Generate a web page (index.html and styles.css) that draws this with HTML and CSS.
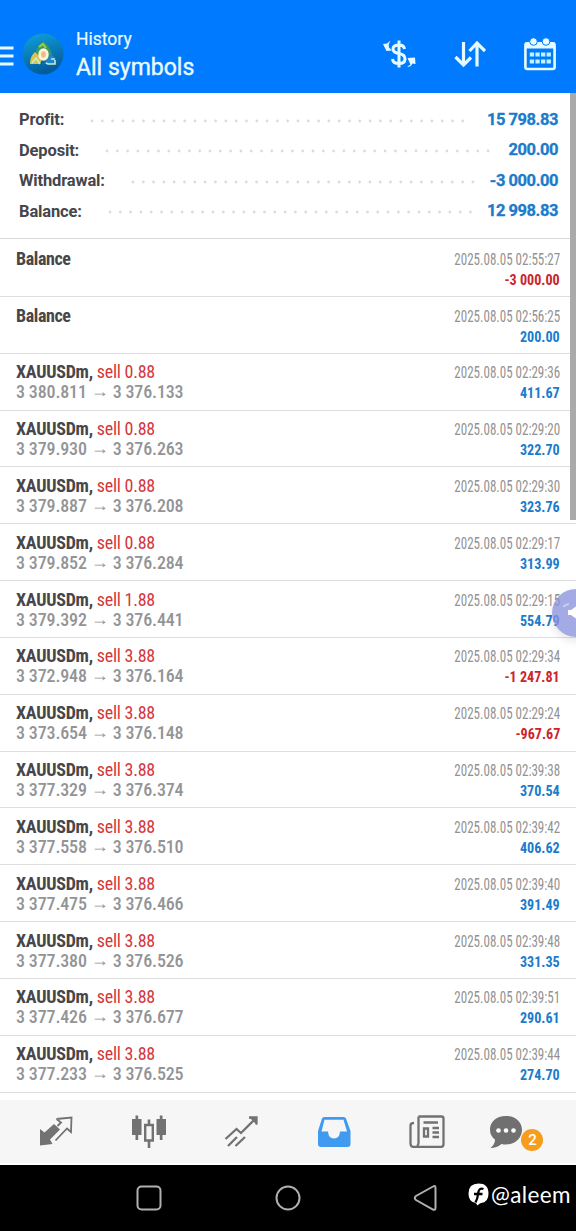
FILE: index.html
```html
<!DOCTYPE html>
<html lang="en">
<head>
<meta charset="utf-8">
<title>History</title>
<link rel="stylesheet" href="styles.css">
</head>
<body>
<div class="app">
<header class="bar">
  <svg class="menu" width="14" height="22" viewBox="0 0 14 22"><path d="M0 3H13.5M0 11H13.5M0 19H13.5" stroke="#e8fbff" stroke-width="2.8"/></svg>
  <svg class="logo" width="42" height="44" viewBox="0 0 42 44">
    <defs><linearGradient id="g" x1="0" y1="0" x2="0.3" y2="1"><stop offset="0" stop-color="#10a2dc"/><stop offset="1" stop-color="#045c9c"/></linearGradient></defs>
    <circle cx="21" cy="22" r="20.5" fill="url(#g)"/>
    <path d="M13 24Q15 12 21 10Q27 12 30 23L24 28H16Z" fill="#3c9a5a"/>
    <path d="M8 32Q8 24 13 20L20 27L18 32Z" fill="#d8c548"/>
    <path d="M22 32L28 22Q34 24 34 32Z" fill="#1c86c8"/>
    <path d="M10 31L14 26L18 32M24 31L26 32H33V28M29 27L33 27" fill="none" stroke="#c8ecd8" stroke-width="1.5"/>
    <path d="M17 15L21 12L24 16" fill="none" stroke="#9ccf50" stroke-width="2"/>
    <ellipse cx="21.500" cy="22.500" rx="5.200" ry="6.200" fill="#fff4dc"/><ellipse cx="21.500" cy="22.500" rx="2.400" ry="3.200" fill="#e8bd88"/>
  </svg>
  <div class="titles"><div class="t1">History</div><div class="t2">All symbols</div></div>
  <div class="actions">
    <svg width="34" height="30" viewBox="0 0 34 30" fill="none" stroke="#e6fbff" stroke-width="3">
      <path d="M22.500 10Q22 6 17 6Q11 6 11 10Q11 13.500 17 14.500Q23 15.500 23 20Q23 24.500 17 24.500Q11 24.500 10.500 20M17 1.500V28.500"/>
      <path d="M8.500 1.500L5 4.500L1 5L4.500 12L10 11.500L7 8.500Q6 5.500 8.500 1.500ZM25 28L28.500 25.500L25.500 19L33 18.500L33.500 25L30.500 24.500Q29 28 25 28Z" fill="#e6fbff" stroke="none"/></svg>
    <svg width="32" height="28" viewBox="0 0 32 28" fill="none" stroke="#e6fbff" stroke-width="3.200"><path d="M9.500 2V25M1.500 17L9.500 25L17 17.500M23 26.500V3M15.500 11L23 3L31 11"/></svg>
    <svg width="32" height="34" viewBox="0 0 32 34"><rect x="1.400" y="6.400" width="29.200" height="25.600" rx="2" fill="none" stroke="#e6fbff" stroke-width="2.600"/><path d="M1 5.500H31V11.500H1Z" fill="#e6fbff"/><g fill="#e6fbff" stroke="#007aff"><circle cx="9.500" cy="4.500" r="3.800"/><circle cx="22" cy="4.500" r="3.800"/></g><path d="M5.800 17.500H26.900M5.800 24.500H26.900" stroke="#c0f2ff" stroke-width="4.200" stroke-dasharray="4.300 1.300"/></svg>
  </div>
</header>
<main class="content">
<section class="summary">
  <div class="sum"><b>Profit:</b><svg class="dots"><line x1="2" x2="100%" y1="2" y2="2"/></svg><strong>15 798.83</strong></div>
  <div class="sum"><b>Deposit:</b><svg class="dots"><line x1="2" x2="100%" y1="2" y2="2"/></svg><strong>200.00</strong></div>
  <div class="sum"><b>Withdrawal:</b><svg class="dots"><line x1="2" x2="100%" y1="2" y2="2"/></svg><strong>-3 000.00</strong></div>
  <div class="sum"><b>Balance:</b><svg class="dots"><line x1="2" x2="100%" y1="2" y2="2"/></svg><strong>12 998.83</strong></div>
</section>
<section class="list">
<div class="row first"><div class="left"><div class="sym"><b>Balance</b></div></div><div class="right"><time>2025.08.05 02:55:27</time><strong class="neg">-3 000.00</strong></div></div>
<div class="row"><div class="left"><div class="sym"><b>Balance</b></div></div><div class="right"><time>2025.08.05 02:56:25</time><strong>200.00</strong></div></div>
<div class="row"><div class="left"><div class="sym"><b>XAUUSDm,</b> <span>sell 0.88</span></div><div class="price">3 380.811 <i>→</i> 3 376.133</div></div><div class="right"><time>2025.08.05 02:29:36</time><strong>411.67</strong></div></div>
<div class="row"><div class="left"><div class="sym"><b>XAUUSDm,</b> <span>sell 0.88</span></div><div class="price">3 379.930 <i>→</i> 3 376.263</div></div><div class="right"><time>2025.08.05 02:29:20</time><strong>322.70</strong></div></div>
<div class="row"><div class="left"><div class="sym"><b>XAUUSDm,</b> <span>sell 0.88</span></div><div class="price">3 379.887 <i>→</i> 3 376.208</div></div><div class="right"><time>2025.08.05 02:29:30</time><strong>323.76</strong></div></div>
<div class="row"><div class="left"><div class="sym"><b>XAUUSDm,</b> <span>sell 0.88</span></div><div class="price">3 379.852 <i>→</i> 3 376.284</div></div><div class="right"><time>2025.08.05 02:29:17</time><strong>313.99</strong></div></div>
<div class="row"><div class="left"><div class="sym"><b>XAUUSDm,</b> <span>sell 1.88</span></div><div class="price">3 379.392 <i>→</i> 3 376.441</div></div><div class="right"><time>2025.08.05 02:29:15</time><strong>554.79</strong></div></div>
<div class="row"><div class="left"><div class="sym"><b>XAUUSDm,</b> <span>sell 3.88</span></div><div class="price">3 372.948 <i>→</i> 3 376.164</div></div><div class="right"><time>2025.08.05 02:29:34</time><strong class="neg">-1 247.81</strong></div></div>
<div class="row"><div class="left"><div class="sym"><b>XAUUSDm,</b> <span>sell 3.88</span></div><div class="price">3 373.654 <i>→</i> 3 376.148</div></div><div class="right"><time>2025.08.05 02:29:24</time><strong class="neg">-967.67</strong></div></div>
<div class="row"><div class="left"><div class="sym"><b>XAUUSDm,</b> <span>sell 3.88</span></div><div class="price">3 377.329 <i>→</i> 3 376.374</div></div><div class="right"><time>2025.08.05 02:39:38</time><strong>370.54</strong></div></div>
<div class="row"><div class="left"><div class="sym"><b>XAUUSDm,</b> <span>sell 3.88</span></div><div class="price">3 377.558 <i>→</i> 3 376.510</div></div><div class="right"><time>2025.08.05 02:39:42</time><strong>406.62</strong></div></div>
<div class="row"><div class="left"><div class="sym"><b>XAUUSDm,</b> <span>sell 3.88</span></div><div class="price">3 377.475 <i>→</i> 3 376.466</div></div><div class="right"><time>2025.08.05 02:39:40</time><strong>391.49</strong></div></div>
<div class="row"><div class="left"><div class="sym"><b>XAUUSDm,</b> <span>sell 3.88</span></div><div class="price">3 377.380 <i>→</i> 3 376.526</div></div><div class="right"><time>2025.08.05 02:39:48</time><strong>331.35</strong></div></div>
<div class="row"><div class="left"><div class="sym"><b>XAUUSDm,</b> <span>sell 3.88</span></div><div class="price">3 377.426 <i>→</i> 3 376.677</div></div><div class="right"><time>2025.08.05 02:39:51</time><strong>290.61</strong></div></div>
<div class="row"><div class="left"><div class="sym"><b>XAUUSDm,</b> <span>sell 3.88</span></div><div class="price">3 377.233 <i>→</i> 3 376.525</div></div><div class="right"><time>2025.08.05 02:39:44</time><strong>274.70</strong></div></div>
</section>
<div class="scrollbar"></div>
<div class="bubble"><svg width="48" height="48" viewBox="0 0 48 48"><path d="M16 21H19L24 17.500V29.500L19 26H16Z" fill="#fff"/><path d="M11.500 18Q13 15.500 17 15" fill="none" stroke="#c9cdf0" stroke-width="2"/></svg></div>
</main>
<nav class="tabs">
  <svg viewBox="0 0 36 36"><path d="M2 17L6.500 20.500L16 12L22 17.500L12 27.500L14.500 32L2 33.500Z" fill="#727272"/><path d="M18.500 7L33.500 5.500L33 20L29 16.500L17.500 28.500M18.500 7L23 10.500L19.500 14" fill="none" stroke="#727272" stroke-width="1.800"/></svg>
  <svg viewBox="0 0 36 36" fill="#727272"><path d="M1 7H10.500V23H1ZM25.500 7H35V23H25.500ZM4.500 3.500H7.200V28H4.500ZM28.800 3.500H31.500V28H28.800ZM16.700 7.500H19.300V13H16.700ZM16.700 28H19.300V36H16.700Z"/><path d="M14.200 13H21.800V28.500H14.200Z" fill="none" stroke="#727272" stroke-width="2.400"/></svg>
  <svg viewBox="0 0 36 36" fill="none" stroke="#727272" stroke-width="2.300"><path d="M2.500 27L13.500 17L18 21L33 6M26 5.500H33.500V12.500M5 34L14 25M12.500 34L22 25"/><path d="M26 5L34 5V13Z" fill="#727272" stroke="none"/></svg>
  <svg viewBox="0 0 36 36"><path d="M2 19L6 6.500Q6.500 5 8.500 5H27.500Q29.500 5 30 6.500L34.500 19V32Q34.500 35 31.500 35H5Q2 35 2 32Z" fill="#409af0"/><path d="M5.500 19.500L8.500 7.700H27.500L31 19.500H24Q23.500 26.500 18 26.500Q12.500 26.500 12 19.500Z" fill="#f6f6f6"/></svg>
  <svg viewBox="0 0 36 36" fill="none" stroke="#727272" stroke-width="2.300"><path d="M9.500 4.500H32.500Q34.500 4.500 34.500 6.500V32Q34.500 35 31.500 35H5Q1.500 35 1.500 31V13.500Q1.500 11 5 11M9.500 4.500V31Q9.500 33 8 34M14.500 10.500H29M23.500 16H30M23.500 20.500H30M23.500 25H30"/><path d="M15 16.500H19V24.500H15Z"/></svg>
  <div class="chat"><svg viewBox="0 0 36 36"><path d="M18 4C8 4 2 10 2 17.500Q2 24 7 27.500Q7 32.500 2.500 36Q9 36 13.500 32Q16 32.500 18 32.500C28 32.500 34 25 34 18S28 4 18 4Z" fill="#707070"/><g fill="#fff"><circle cx="10.500" cy="18.500" r="2.300"/><circle cx="18" cy="18.500" r="2.300"/><circle cx="25.500" cy="18.500" r="2.300"/></g></svg><span class="badge">2</span></div>
</nav>
<footer class="sys">
  <svg width="28" height="28" viewBox="0 0 28 28"><rect x="2.500" y="2.500" width="23" height="23" rx="4"/></svg>
  <svg width="28" height="28" viewBox="0 0 28 28"><circle cx="14" cy="14" r="11.500"/></svg>
  <svg width="28" height="28" viewBox="0 0 28 28"><path d="M20 2.500Q22.500 1 22.500 4V24Q22.500 26.500 20 25.500L3 16Q.5 14 3 12Z"/></svg>
  <div class="tag"><svg width="21" height="23" viewBox="0 0 21 23"><path d="M10.500 .5C17 .5 20.500 3.500 20.500 10.500Q20.500 19.500 13 20Q11 20.500 9.500 22.500Q8.500 20.500 7 19.800Q.5 18.500 .5 10.500Q.5 .5 10.500 .5Z" fill="#fff" stroke="none"/><path d="M15.500 6Q11 4.500 10.300 9.500Q9.800 15 7.500 19.500M6 11H14.500" stroke="#000" stroke-width="2.300"/></svg><span>@aleem</span></div>
</footer>
</div>
</body>
</html>
```
FILE: styles.css
```css
* { box-sizing: border-box; }
body { margin: 0; background: #fff; font-family: Roboto, "Liberation Sans", sans-serif; }
.app { width: 576px; height: 1231px; display: flex; flex-direction: column; overflow: hidden; }
.bar { height: 93px; flex: none; background: #007aff; display: flex; align-items: center; padding: 16px 20px 0 0; color: #e8fbff; }
.menu { margin: 2px 8px 0 0; }
.logo { margin: -2px 12px 0 0; flex: none; }
.titles { flex: 1; white-space: nowrap; padding-top: 2px; }
.t1 { font-size: 17.500px; line-height: 21px; -webkit-text-stroke: .2px; }
.t2 { font-size: 23px; line-height: 28px; margin-top: 4px; -webkit-text-stroke: .4px; }
.actions { display: flex; align-items: center; gap: 38px; margin-top: -1px; }
.content { position: relative; height: 1007px; flex: none; }
.summary { height: 146px; padding: 11px 18px 0 19px; border-bottom: 1px solid #d8d8d8; }
.sum { display: flex; align-items: center; height: 30.500px; white-space: nowrap; }
.sum b { font-size: 16.500px; letter-spacing: -.15px; color: #46464b; font-weight: 700; padding-top: 1px; }
.sum strong { font-size: 16.500px; letter-spacing: -.45px; color: #1b7bcb; font-weight: 700; -webkit-text-stroke: .3px; }
.dots { flex: 1; min-width: 0; height: 4px; margin: 3px 15px 0 26px; }
.dots line { stroke: #dcdcdc; stroke-width: 2.800; stroke-linecap: round; stroke-dasharray: 0 10.300; }
.row { height: 56.830px; display: flex; justify-content: space-between; padding: 8.500px 16px 0; border-bottom: 1.500px solid #dedede; font-stretch: 75%; white-space: nowrap; font-family: "Roboto Condensed", Roboto, sans-serif; }
.row.first { height: 58px; padding-top: 10px; }
.sym { font-size: 18px; line-height: 20px; color: #46464b; letter-spacing: -.25px; }
.first .sym, .first + .row .sym { letter-spacing: -.4px; }
.sym span { color: #d3373b; }
.price { font-size: 18px; line-height: 20px; color: #929496; font-weight: 500; letter-spacing: -.15px; }
.price i { display: inline-block; line-height: 1; font-style: normal; transform: translateY(-1px); }
.right { display: flex; flex-direction: column; align-items: flex-end; }
time { font-size: 16px; line-height: 21px; color: #929292; transform: scaleX(.813); transform-origin: right; }
.right strong { font-size: 15.500px; line-height: 20px; color: #1b7bcb; transform: scaleX(.91); transform-origin: right; }
.right .neg { color: #ca252b; }
.scrollbar { position: absolute; right: 0; top: 0; width: 6px; height: 427px; background: #aaa; }
.bubble { position: absolute; left: 552px; top: 496px; width: 48px; height: 48px; border-radius: 50%; background: rgba(138,146,220,.78); box-shadow: 0 4px 8px rgba(0,0,0,.1); }
.tabs { height: 65px; flex: none; background: #f6f6f6; border-bottom: 2px solid #fff; display: flex; align-items: center; gap: 56.700px; padding: 0 0 3px 38px; }
.tabs svg { width: 36px; height: 36px; display: block; flex: none; }
.chat { position: relative; margin-left: -13px; }
.badge { position: absolute; left: 33px; top: 17px; width: 22px; height: 22px; border-radius: 50%; background: #f79d1e; color: #fff; font-size: 15px; font-weight: 500; line-height: 22px; text-align: center; }
.sys { flex: 1; background: #000; display: flex; align-items: center; padding: 0 5px 0 135px; }
.sys > svg { margin-right: 111px; flex: none; fill: none; stroke: #b0b0b0; stroke-width: 2; }
.sys > svg:nth-of-type(3) { margin-right: 27px; }
.tag { display: flex; align-items: center; color: #fff; font-size: 22.500px; gap: 2px; margin-bottom: 7px; }
.tag svg { fill: none; }
.tag span { font-family: Lato, sans-serif; letter-spacing: .4px; }
```
